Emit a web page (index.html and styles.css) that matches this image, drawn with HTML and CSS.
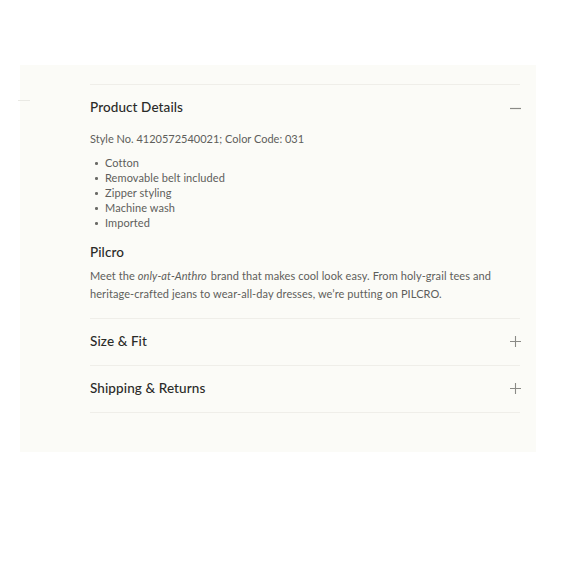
FILE: index.html
```html
<!DOCTYPE html>
<html lang="en">
<head>
<meta charset="utf-8">
<link rel="stylesheet" href="styles.css">
</head>
<body>
<div class="panel">
  <div class="accordion">
    <section class="item open">
      <div class="head">
        <h3>Product Details</h3>
        <svg class="icon minus" width="11" height="11" viewBox="0 0 11 11"><path d="M0 5.5H11" stroke="#8a8a86" stroke-width="1.2"/></svg>
      </div>
      <div class="body">
        <p class="style">Style No. 4120572540021; Color Code: 031</p>
        <ul class="bullets">
          <li>Cotton</li>
          <li>Removable belt included</li>
          <li>Zipper styling</li>
          <li>Machine wash</li>
          <li>Imported</li>
        </ul>
        <h4>Pilcro</h4>
        <p class="desc">Meet the <em>only-at-Anthro</em> brand that makes cool look easy. From holy-grail tees and heritage-crafted jeans to wear-all-day dresses, we’re putting on PILCRO.</p>
      </div>
    </section>
    <section class="item">
      <div class="head">
        <h3>Size &amp; Fit</h3>
        <svg class="icon" width="11" height="11" viewBox="0 0 11 11"><path d="M0 5.5H11M5.5 0V11" stroke="#8a8a86" stroke-width="1.1"/></svg>
      </div>
    </section>
    <section class="item">
      <div class="head">
        <h3>Shipping &amp; Returns</h3>
        <svg class="icon" width="11" height="11" viewBox="0 0 11 11"><path d="M0 5.5H11M5.5 0V11" stroke="#8a8a86" stroke-width="1.1"/></svg>
      </div>
    </section>
  </div>
</div>
</body>
</html>
```
FILE: styles.css
```css
html, body {
  margin: 0;
  padding: 0;
  background: #ffffff;
}
body {
  font-family: Lato, "Noto Sans", sans-serif;
  padding-top: 65px;
}
.panel {
  position: relative;
  margin-left: 20px;
  width: 516px;
  height: 387px;
  box-sizing: border-box;
  background: #fbfbf7;
  padding: 19px 16px 0 70px;
}
.panel::before {
  content: "";
  position: absolute;
  left: -2px;
  top: 35px;
  width: 12px;
  height: 1px;
  background: #e9e9e4;
}
.accordion {
  border-top: 1px solid #efeee9;
}
.item {
  border-bottom: 1px solid #efeee9;
}
.head {
  height: 46px;
  box-sizing: border-box;
  padding-bottom: 2px;
  display: flex;
  align-items: center;
  justify-content: space-between;
}
.head h3 {
  margin: 0;
  font-size: 13.5px;
  font-weight: 500;
  letter-spacing: 0.1px;
  color: #2a2a28;
}
.icon {
  display: block;
  margin-right: -1px;
  margin-top: 1px;
}
.icon.minus {
  margin-top: 2px;
}
.body {
  padding: 0 0 15px 0;
  color: #5e5e5b;
  font-size: 11px;
  letter-spacing: 0.08px;
}
.style {
  margin: 0;
  line-height: 16px;
  letter-spacing: 0;
}
.bullets {
  list-style: none;
  margin: 8px 0 0 0;
  padding: 0;
}
.bullets li {
  position: relative;
  padding-left: 15px;
  line-height: 15px;
}
.bullets li::before {
  content: "";
  position: absolute;
  left: 5px;
  top: 7px;
  width: 2.6px;
  height: 2.6px;
  border-radius: 50%;
  background: #6a6a66;
}
h4 {
  margin: 12px 0 0 0;
  font-size: 13.5px;
  font-weight: 500;
  letter-spacing: 0.1px;
  color: #2a2a28;
  line-height: 20px;
}
.desc {
  margin: 5px 0 0 0;
  line-height: 18px;
}
.desc em {
  font-style: italic;
  padding-right: 1px;
}
```
